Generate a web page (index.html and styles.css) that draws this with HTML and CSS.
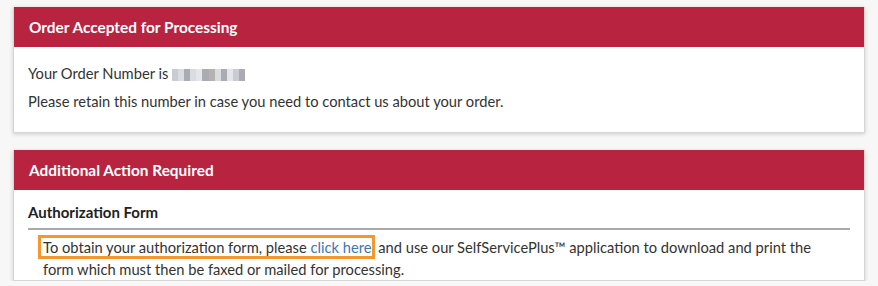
FILE: index.html
```html
<!DOCTYPE html>
<html>
<head>
<meta charset="utf-8">
<link rel="stylesheet" href="styles.css">
</head>
<body>
<div class="page">
  <section class="card">
    <div class="card-head">Order Accepted for Processing</div>
    <div class="card-body first">
      <p class="line">Your Order Number is <span class="blur"><i></i><i></i><i></i><i></i><i></i><i></i><i></i><i></i><i></i><i></i><i></i><i></i></span></p>
      <p class="line">Please retain this number in case you need to contact us about your order.</p>
    </div>
  </section>
  <section class="card">
    <div class="card-head">Additional Action Required</div>
    <div class="card-body second">
      <h3 class="sub">Authorization Form</h3>
      <p class="para"><span class="mark">To obtain your authorization form, please <a href="#" class="link">click here</a></span> and use our SelfServicePlus™ application to download and print the form which must then be faxed or mailed for processing.</p>
    </div>
  </section>
</div>
</body>
</html>
```

FILE: styles.css
```css
html, body {
  margin: 0;
  padding: 0;
  background: #f7f7f7;
  font-family: Lato, "Open Sans", sans-serif;
  color: #333;
}
.page {
  padding: 7px 13px 0 13px;
  display: flex;
  flex-direction: column;
  gap: 17px;
}
.card {
  width: 850px;
  background: #fff;
  border: 1px solid #d6d6d6;
  border-top: 0;
  box-shadow: 0 1px 4px rgba(0,0,0,0.18);
}
.card-head {
  height: 40px;
  background: #b8243f;
  color: #fff;
  font-weight: bold;
  font-size: 15.4px;
  display: flex;
  align-items: center;
  padding-left: 15px;
}
.card-body.first {
  padding: 16px 14px 21px 14px;
}
.line {
  margin: 0;
  font-size: 14.7px;
  line-height: 20px;
}
.line + .line { margin-top: 8px; }
.blur {
  display: inline-flex;
  vertical-align: -2px;
  height: 12px;
  width: 73px;
}
.blur i {
  flex: 1;
  background: #c9ccd2;
}
.blur i:nth-child(2n) { background: #d9dce1; }
.blur i:nth-child(3n) { background: #a9acb3; }
.blur i:nth-child(5n) { background: #e4e6e9; }
.blur i:nth-child(7n) { background: #b7b2ad; }
.card-body.second {
  padding: 12px 14px 0 14px;
}
.sub {
  margin: 0;
  font-size: 15px;
  font-weight: bold;
  line-height: 20px;
  padding-bottom: 6px;
  border-bottom: 2px solid #a9a9a9;
  color: #222;
}
.para {
  margin: 6px 0 0 0;
  padding: 0 15px;
  font-size: 14.7px;
  line-height: 22px;
}
.mark {
  border: 3px solid #f7962f;
  margin-left: -5px;
  padding: 0 0 0 2px;
}
.link {
  color: #3a78b8;
  text-decoration: none;
}
```
